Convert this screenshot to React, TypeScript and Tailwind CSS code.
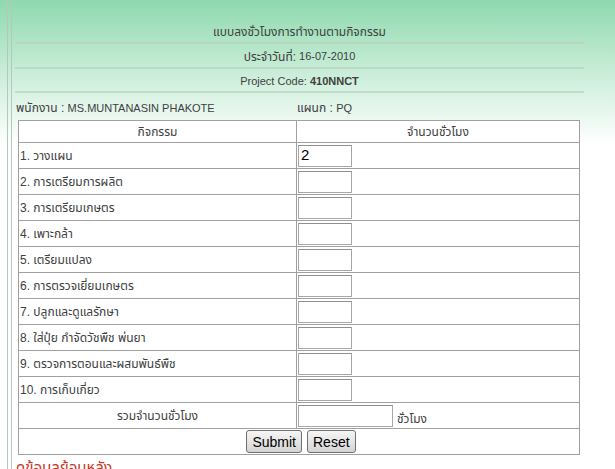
import { useState } from "react";

const activities = [
  "1. วางแผน",
  "2. การเตรียมการผลิต",
  "3. การเตรียมเกษตร",
  "4. เพาะกล้า",
  "5. เตรียมแปลง",
  "6. การตรวจเยี่ยมเกษตร",
  "7. ปลูกและดูแลรักษา",
  "8. ใส่ปุ๋ย กำจัดวัชพืช พ่นยา",
  "9. ตรวจการตอนและผสมพันธ์พืช",
  "10. การเก็บเกี่ยว",
];

const font = "font-['Tahoma','Liberation_Sans','Noto_Sans_Thai','Noto_Sans',sans-serif]";

export default function App() {
  const [hours, setHours] = useState<string[]>(["2", "", "", "", "", "", "", "", "", ""]);
  const [total, setTotal] = useState("");

  const setHour = (i: number, v: string) => {
    const next = [...hours];
    next[i] = v;
    setHours(next);
  };

  return (
    <div
      className={`h-[469px] overflow-hidden bg-gradient-to-b from-[#8dd9ae] via-[#d3f0df] via-[18%] to-white to-[31%] ${font} text-[12px] text-[#404040]`}
    >
      <div className="flex h-full">
        <div className="w-[7px] shrink-0" />
        <div className="w-[4px] shrink-0 border-l border-[#b3c9bb]" />
        <div className="flex-1 border-l border-[#b3c9bb] pl-[3px] pt-[19px] pr-[31px]">
          {/* Header */}
          <div className="flex h-[25px] items-center justify-center border-b-2 border-[#b8d6c2] pt-[2px]">
            แบบลงชั่วโมงการทำงานตามกิจกรรม
          </div>
          <div className="flex h-[25px] items-center justify-center border-b-2 border-[#bcd8c6] pt-[2px]">
            ประจำวันที่: <span className="ml-[3px] text-[11px]">16-07-2010</span>
          </div>
          <div className="flex h-[24px] items-center justify-center border-b-2 border-[#c2dccb] pt-[2px] text-[11px]">
            Project Code:&nbsp;<b className="font-bold">410NNCT</b>
          </div>

          {/* Employee */}
          <div className="flex h-[27px] items-center pl-[1px] pt-[2px]">
            <span className="w-[281px]">
              พนักงาน : <span className="text-[11px]">MS.MUNTANASIN PHAKOTE</span>
            </span>
            <span>
              แผนก : <span className="text-[11px]">PQ</span>
            </span>
          </div>

          {/* Activity table */}
          <table className="ml-[3px] w-[562px] border-collapse border border-[#a0a0a0] bg-white">
            <tbody>
              <tr className="h-[22px]">
                <td className="w-[278px] border border-[#a0a0a0] text-center">กิจกรรม</td>
                <td className="border border-[#a0a0a0] text-center">จำนวนชั่วโมง</td>
              </tr>
              {activities.map((a, i) => (
                <tr key={a} className="h-[26px]">
                  <td className="border border-[#a0a0a0] px-[1px]">{a}</td>
                  <td className="border border-[#a0a0a0] px-[1px]">
                    <input
                      value={hours[i]}
                      onChange={(e) => setHour(i, e.target.value)}
                      className="block h-[22px] w-[54px] border border-[#a7a7a7] border-t-[#8f8f8f] bg-white px-[2px] font-['Liberation_Sans',sans-serif] text-[15px] text-black outline-none"
                    />
                  </td>
                </tr>
              ))}
              <tr className="h-[26px]">
                <td className="border border-[#a0a0a0] text-center">รวมจำนวนชั่วโมง</td>
                <td className="border border-[#a0a0a0] px-[1px]">
                  <div className="flex items-end">
                    <input
                      value={total}
                      onChange={(e) => setTotal(e.target.value)}
                      className="block h-[22px] w-[95px] border border-[#a7a7a7] border-t-[#8f8f8f] bg-white px-[2px] text-[14px] outline-none"
                    />
                    <span className="ml-[4px] leading-[16px]">ชั่วโมง</span>
                  </div>
                </td>
              </tr>
              <tr className="h-[26px]">
                <td colSpan={2} className="border border-[#a0a0a0]">
                  <div className="flex justify-center gap-[5px] pl-[4px]">
                    <button className="h-[23px] rounded-[3px] border border-[#707070] bg-gradient-to-b from-[#f6f6f6] to-[#d4d4d4] px-[5px] font-['Liberation_Sans',sans-serif] text-[14px] leading-none text-black">
                      Submit
                    </button>
                    <button className="h-[23px] rounded-[3px] border border-[#707070] bg-gradient-to-b from-[#f6f6f6] to-[#d4d4d4] px-[5px] font-['Liberation_Sans',sans-serif] text-[14px] leading-none text-black">
                      Reset
                    </button>
                  </div>
                </td>
              </tr>
            </tbody>
          </table>

          <div className="mt-[2px] pl-[1px] text-[15px] text-[#c0392b]">ดูข้อมูลย้อนหลัง</div>
        </div>
      </div>
    </div>
  );
}
